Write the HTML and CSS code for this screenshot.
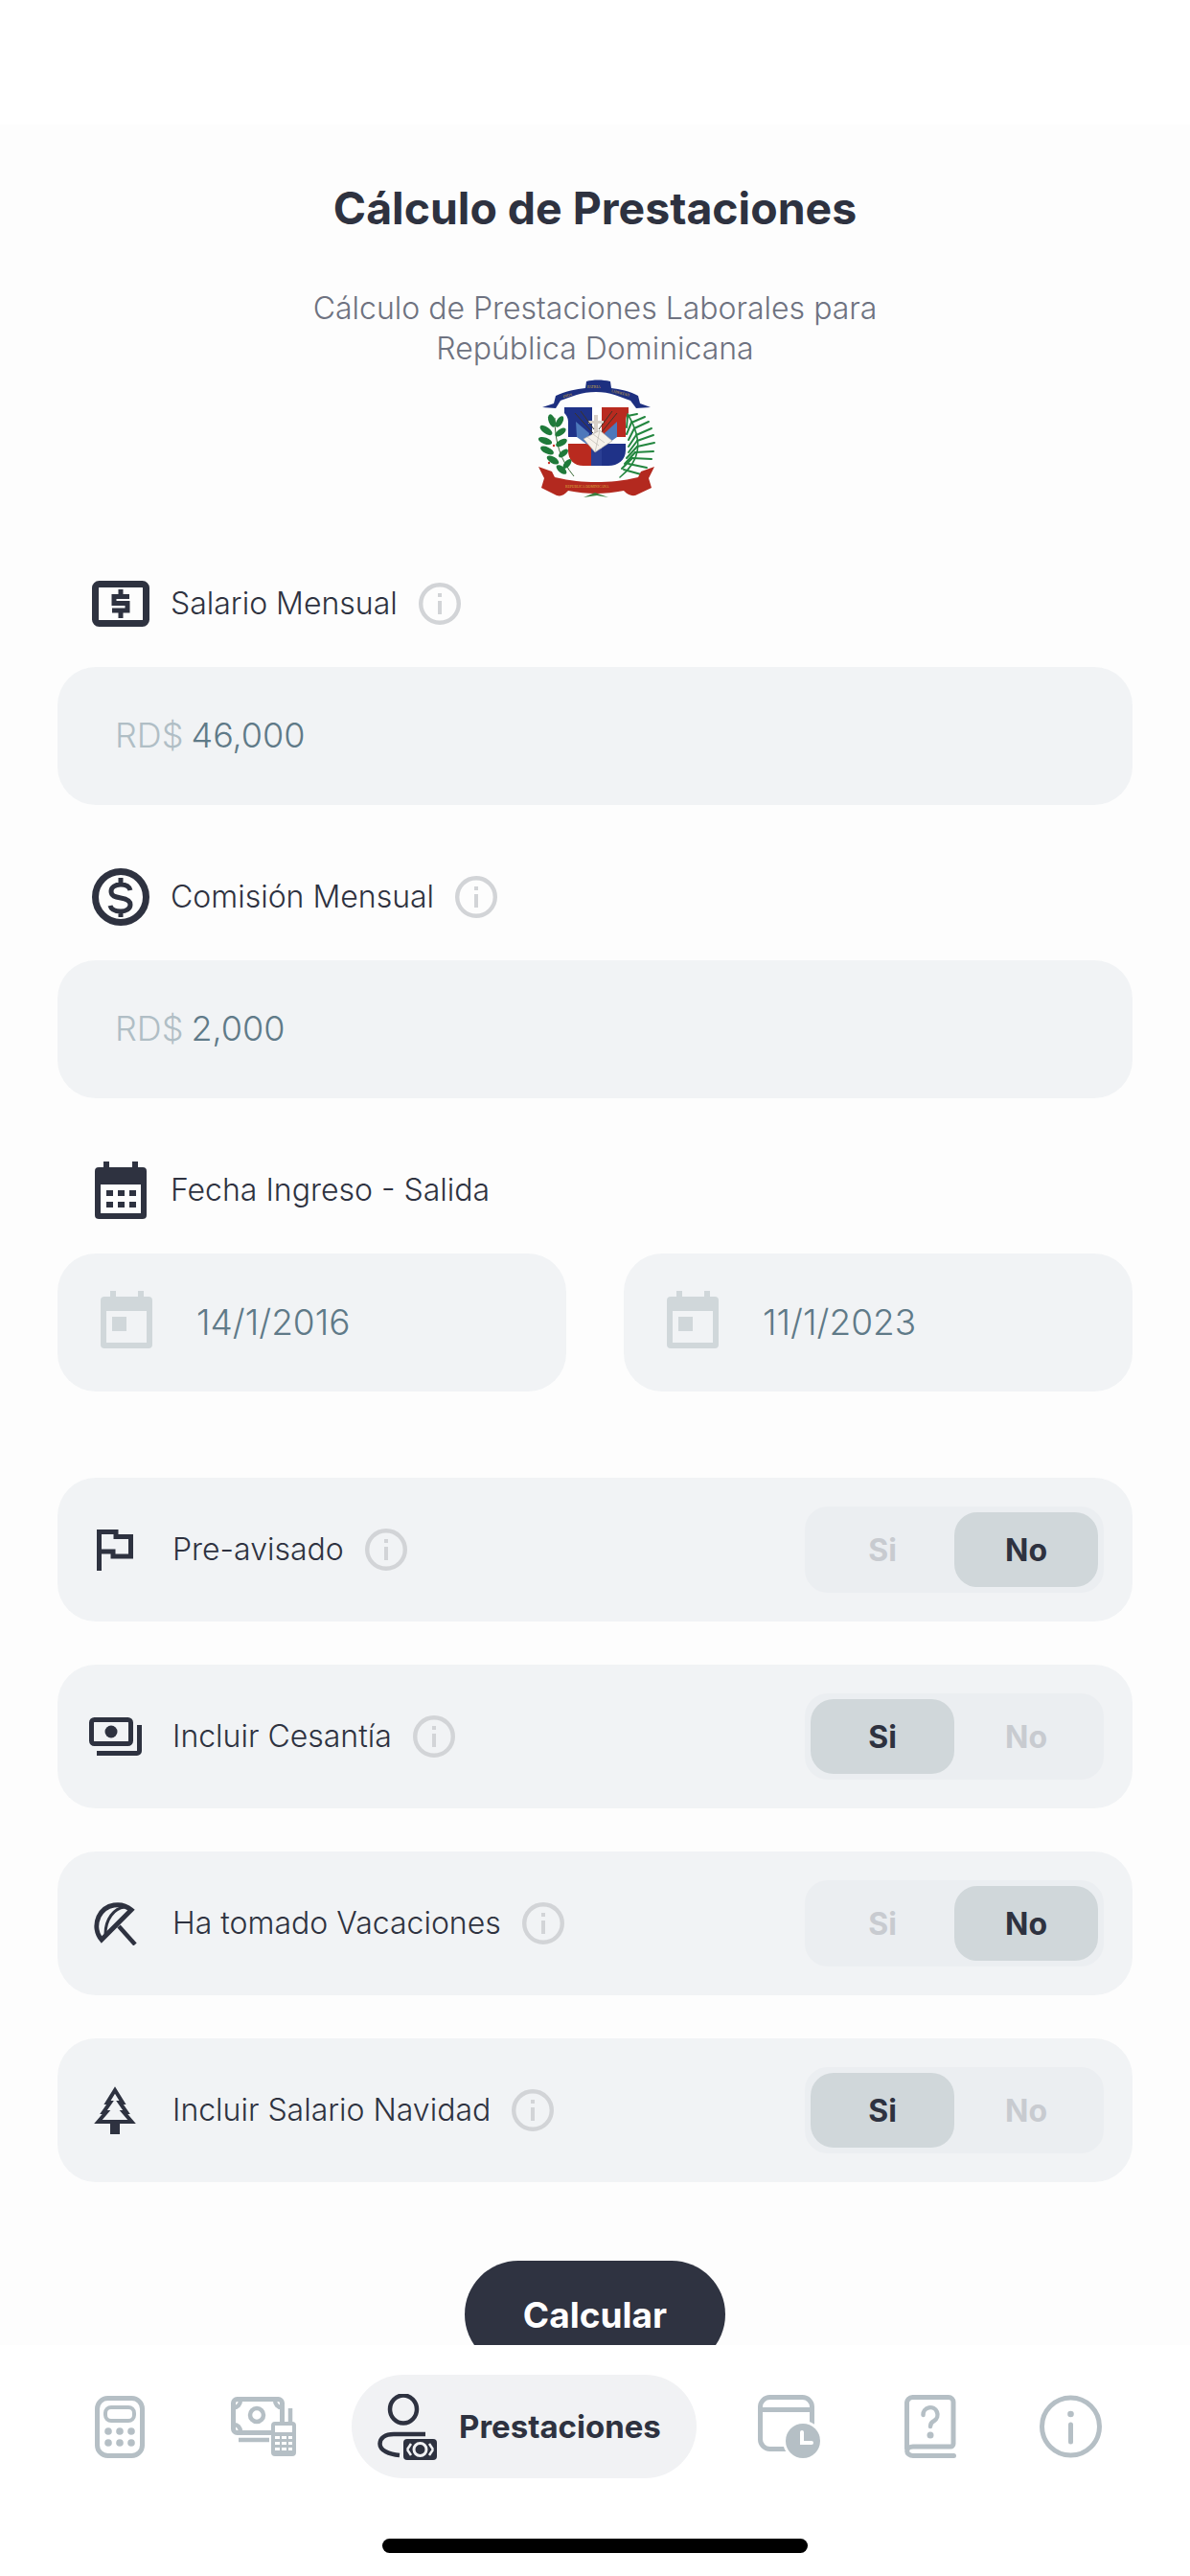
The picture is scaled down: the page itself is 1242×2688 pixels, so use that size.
FILE: index.html
```html
<!DOCTYPE html>
<html lang="es">
<head>
<meta charset="utf-8">
<title>Cálculo de Prestaciones</title>
<link rel="stylesheet" href="styles.css">
</head>
<body>
<svg class="defs" width="0" height="0">
  <defs>
    <symbol id="info" viewBox="0 0 44 44">
      <circle cx="22" cy="22" r="19.800" fill="none" stroke="currentColor" stroke-width="4.400"/>
      <rect x="20" y="11" width="4" height="4" fill="currentColor"/>
      <rect x="20" y="19" width="4" height="14" fill="currentColor"/>
    </symbol>
    <symbol id="cal-light" viewBox="0 0 54 60">
      <path fill-rule="evenodd" fill="#d0d7da" d="M10 0h6v6h23V0h6v6h5a4 4 0 0 1 4 4v46a4 4 0 0 1-4 4H4a4 4 0 0 1-4-4V10a4 4 0 0 1 4-4h6zM6 21v33h42V21z"/>
      <rect x="12" y="27" width="15" height="15" fill="#d0d7da"/>
    </symbol>
  </defs>
</svg>
<div class="screen">
  <div class="status"></div>
  <main class="content">
    <h1 class="title">Cálculo de Prestaciones</h1>
    <p class="subtitle">Cálculo de Prestaciones Laborales para<br>República Dominicana</p>
    <div class="emblem-wrap">
      <svg class="emblem" width="160" height="140" viewBox="0 0 160 140">
        <defs>
          <clipPath id="shield"><path d="M48 35H115V41C113 43 112 46 112 50V80C112 90 104 96 94 96H84L81 100L78 96H68C58 96 52 90 52 80V50C52 46 50 43 48 41Z"/></clipPath>
        </defs>
        <path fill="#1d2f80" d="M25 35L37 31L39 23C50 18 60 16 70 15L71 8C78 6 88 6 96 8L97 15C106 16 116 18 125 23L127 31L138 35L123 36L117 28C106 24 96 19 81 19C66 19 55 24 44 28L39 36Z"/>
        <text class="emblem-text" x="47" y="25" transform="rotate(-14 47 25)">DIOS</text>
        <text class="emblem-text" x="72" y="15">PATRIA</text>
        <text class="emblem-text" x="97" y="19" transform="rotate(14 97 19)">LIBERTAD</text>
        <g clip-path="url(#shield)">
          <rect x="46" y="33" width="72" height="68" fill="#fff"/>
          <rect x="46" y="33" width="31" height="33" fill="#1f3288"/>
          <rect x="87" y="33" width="30" height="33" fill="#b92a1f"/>
          <rect x="46" y="73" width="31" height="28" fill="#b92a1f"/>
          <rect x="87" y="73" width="30" height="28" fill="#1f3288"/>
          <path fill="#4d78bb" d="M60 50L74 62L72 74L61 66Z"/>
          <path fill="#4d78bb" d="M103 50L90 62L92 74L103 66Z"/>
          <rect x="76" y="78" width="11" height="18" fill="#2b3f94"/>
          <path fill="#d8d0c8" d="M79 43h4v6h6v3h-6v13h-4V52h-6v-3h6z"/>
        </g>
        <g stroke="#3d3428" stroke-width="1" fill="none">
          <path d="M59 41L78 62"/><path d="M65 39L79 58"/><path d="M103 41L86 62"/><path d="M98 39L84 58"/>
        </g>
        <path fill="#f6f2ea" stroke="#a9a59c" stroke-width=".6" d="M68 68L85 59L98 70L80 82Z"/>
        <path stroke="#a9a59c" stroke-width=".5" d="M85 59L80 82M72 66L84 75M78 63L90 72"/>
        <g fill="#1f7a3a">
          <path fill="none" stroke="#3a6b36" stroke-width="1" d="M58 107C44 90 38 72 38 46"/>
          <ellipse cx="35" cy="49" rx="3.400" ry="7" transform="rotate(-20 35 49)"/>
          <ellipse cx="43" cy="50" rx="3.200" ry="6.500" transform="rotate(30 43 50)"/>
          <ellipse cx="29" cy="59" rx="3.400" ry="7.500" transform="rotate(-55 29 59)"/>
          <ellipse cx="44" cy="61" rx="3.200" ry="6.500" transform="rotate(55 44 61)"/>
          <ellipse cx="28" cy="70" rx="3.400" ry="7.500" transform="rotate(-70 28 70)"/>
          <ellipse cx="45" cy="72" rx="3.200" ry="6.500" transform="rotate(60 45 72)"/>
          <ellipse cx="30" cy="80" rx="3.400" ry="7.500" transform="rotate(-65 30 80)"/>
          <ellipse cx="47" cy="83" rx="3" ry="6" transform="rotate(50 47 83)"/>
          <ellipse cx="36" cy="90" rx="3.400" ry="7" transform="rotate(-60 36 90)"/>
          <ellipse cx="51" cy="94" rx="3" ry="6" transform="rotate(40 51 94)"/>
          <ellipse cx="45" cy="100" rx="3.200" ry="6.500" transform="rotate(-50 45 100)"/>
        </g>
        <circle cx="37" cy="75" r="1.200" fill="#c8322a"/>
        <circle cx="32" cy="93" r="1.200" fill="#c8322a"/>
        <g fill="none" stroke="#23863f" stroke-width="2" stroke-linecap="round">
          <path d="M106 108C126 92 132 72 114 42" stroke-width="1.600"/>
          <path d="M114 44L124 42M118 51L132 45M121 57L136 50M123 64L139 57M124 70L141 64M124 76L142 72M122 82L141 81M119 88L139 89M115 94L134 98M110 100L128 105"/>
          <path d="M114 44L113 56M118 51L113 63M121 57L115 69M123 64L115 76M124 70L115 82M124 76L113 88M122 82L111 94M119 88L108 99"/>
        </g>
        <path fill="#b3291f" d="M21 97L35 102L38 108C55 112 67 113 81 113C96 113 109 112 125 108L128 102L142 97L136 109L139 119L122 127C116 128 112 124 110 122C100 124 90 125 81 125C71 125 62 124 52 122C50 124 46 129 40 127L24 119L27 109Z"/>
        <text class="emblem-text emblem-text-low" x="49" y="119">REPUBLICA DOMINICANA</text>
        <path fill="#3a7d3f" d="M68 129L80 124L94 129L82 127Z"/>
      </svg>
    </div>

    <div class="field-label">
      <span class="label-icon">
        <svg width="60" height="48" viewBox="0 0 60 48" fill="none" stroke="#2e3240">
          <rect x="3.500" y="3.500" width="53" height="41" rx="4" stroke-width="7"/>
          <path stroke-width="5" d="M39 16.500H23v7h14v7.500H21M30 9v7M30 32v7"/>
        </svg>
      </span>
      <span class="label-text">Salario Mensual</span>
      <svg class="info" width="44" height="44"><use href="#info"/></svg>
    </div>
    <div class="input"><span class="prefix">RD$</span><span class="value">46,000</span></div>

    <div class="field-label">
      <span class="label-icon">
        <svg width="60" height="60" viewBox="0 0 60 60" fill="none" stroke="#2e3240">
          <circle cx="30" cy="30" r="26.500" stroke-width="7"/>
          <path stroke-width="5" d="M40 23c-1-4-5-6-10-6-6 0-10 3-10 7 0 5 4 6 10 7 6 1 10 3 10 7s-4 7-10 7c-6 0-10-2-11-6M30 10v7M30 45v6"/>
        </svg>
      </span>
      <span class="label-text">Comisión Mensual</span>
      <svg class="info" width="44" height="44"><use href="#info"/></svg>
    </div>
    <div class="input"><span class="prefix">RD$</span><span class="value">2,000</span></div>

    <div class="field-label">
      <span class="label-icon">
        <svg width="54" height="60" viewBox="0 0 54 60">
          <path fill-rule="evenodd" fill="#2e3240" d="M9 0h6v6h24V0h6v6h5a4 4 0 0 1 4 4v46a4 4 0 0 1-4 4H4a4 4 0 0 1-4-4V10a4 4 0 0 1 4-4h5zM6 24v30h42V24z"/>
          <path fill="#2e3240" d="M12 30h7v6h-7zM24 30h7v6h-7zM36 30h7v6h-7zM12 42h7v6h-7zM24 42h7v6h-7zM36 42h7v6h-7z"/>
        </svg>
      </span>
      <span class="label-text">Fecha Ingreso - Salida</span>
    </div>
    <div class="dates">
      <div class="date"><svg class="date-icon" width="54" height="60"><use href="#cal-light"/></svg><span class="value">14/1/2016</span></div>
      <div class="date"><svg class="date-icon" width="54" height="60"><use href="#cal-light"/></svg><span class="value">11/1/2023</span></div>
    </div>

    <div class="options">
      <div class="option">
        <span class="option-icon">
          <svg width="38" height="43" viewBox="0 0 38 43" fill="none" stroke="#2e3240" stroke-width="5">
            <path d="M2.500 43V2.500H20V7.500H35.500V28H17V23H2.500"/>
          </svg>
        </span>
        <span class="label-text">Pre-avisado</span>
        <svg class="info" width="44" height="44"><use href="#info"/></svg>
        <div class="toggle"><span class="seg">Si</span><span class="seg seg-on">No</span></div>
      </div>
      <div class="option">
        <span class="option-icon">
          <svg width="55" height="40" viewBox="0 0 55 40" fill="none" stroke="#2e3240" stroke-width="5">
            <rect x="2.500" y="2.500" width="41" height="25" rx="3"/>
            <circle cx="23" cy="15" r="6.500" fill="#2e3240" stroke="none"/>
            <path d="M52.500 8V35a2.500 2.500 0 0 1-2.500 2.500H8"/>
          </svg>
        </span>
        <span class="label-text">Incluir Cesantía</span>
        <svg class="info" width="44" height="44"><use href="#info"/></svg>
        <div class="toggle"><span class="seg seg-on">Si</span><span class="seg">No</span></div>
      </div>
      <div class="option">
        <span class="option-icon">
          <svg width="45" height="45" viewBox="0 0 45 45" fill="none" stroke="#2e3240">
            <path stroke-width="5" d="M39 8C29-.5 12 1 5 15 1 24 3 33 8 39Z"/>
            <path stroke-width="3" d="M32 5C21 6 12 18 12 33"/>
            <path stroke-width="4.500" d="M26 25L43 44"/>
          </svg>
        </span>
        <span class="label-text">Ha tomado Vacaciones</span>
        <svg class="info" width="44" height="44"><use href="#info"/></svg>
        <div class="toggle"><span class="seg">Si</span><span class="seg seg-on">No</span></div>
      </div>
      <div class="option">
        <span class="option-icon">
          <svg width="44" height="50" viewBox="0 0 44 50">
            <path fill="none" stroke="#2e3240" stroke-width="4" d="M22 4L30 17H27L34 27H31L39.500 37H4.500L13 27H10L17 17H14Z"/>
            <rect x="17" y="38" width="10" height="12" fill="#2e3240"/>
          </svg>
        </span>
        <span class="label-text">Incluir Salario Navidad</span>
        <svg class="info" width="44" height="44"><use href="#info"/></svg>
        <div class="toggle"><span class="seg seg-on">Si</span><span class="seg">No</span></div>
      </div>
    </div>
    <button class="submit" type="button">Calcular</button>
  </main>

  <footer class="nav">
    <div class="tabs">
      <span class="tab tab-left">
        <svg width="52" height="65" viewBox="0 0 52 65" fill="none" stroke="#b5bfc5">
          <rect x="2.500" y="2.500" width="47" height="60" rx="11" stroke-width="5"/>
          <rect x="11" y="12" width="30" height="14" rx="6" stroke-width="4"/>
          <g fill="#b5bfc5" stroke="none">
            <circle cx="14" cy="37" r="3.800"/><circle cx="26" cy="37" r="3.800"/><circle cx="38" cy="37" r="3.800"/>
            <circle cx="14" cy="49" r="3.800"/><circle cx="26" cy="49" r="3.800"/><circle cx="38" cy="49" r="3.800"/>
          </g>
        </svg>
      </span>
      <span class="tab tab-left">
        <svg width="68" height="62" viewBox="0 0 68 62" fill="none" stroke="#b5bfc5">
          <rect x="2.500" y="2.500" width="51" height="35" rx="4" stroke-width="5"/>
          <circle cx="27" cy="19" r="7" stroke-width="4.500"/>
          <path stroke-width="4.500" d="M3 11c4 0 7-3 7-8M53 11c-4 0-7-3-7-8M3 29c4 0 7 3 7 8"/>
          <path stroke-width="4.500" d="M62 12V28M8 45H40"/>
          <rect x="42" y="26" width="26" height="36" rx="4" fill="#b5bfc5" stroke="none"/>
          <rect x="46" y="30" width="18" height="7" fill="#fff" stroke="none"/>
          <g fill="#fff" stroke="none">
            <rect x="46" y="41" width="5" height="3"/><rect x="53" y="41" width="5" height="3"/><rect x="60" y="41" width="4" height="3"/>
            <rect x="46" y="47" width="5" height="3"/><rect x="53" y="47" width="5" height="3"/><rect x="60" y="47" width="4" height="3"/>
            <rect x="46" y="53" width="5" height="3"/><rect x="53" y="53" width="5" height="3"/><rect x="60" y="53" width="4" height="3"/>
          </g>
        </svg>
      </span>
      <span class="tab-active">
        <svg width="62" height="69" viewBox="0 0 62 69" fill="none" stroke="#2e3240">
          <ellipse cx="27" cy="16" rx="14" ry="14.500" stroke-width="4.500"/>
          <path stroke-width="4.500" d="M50 42H17C8 42 2.500 46 2.500 52 2.500 59 12 63 23 64"/>
          <rect x="27" y="47" width="35" height="22" rx="4" fill="#2e3240" stroke="none"/>
          <ellipse cx="44.500" cy="58" rx="6.500" ry="6.500" stroke="#f1f2f4" stroke-width="3"/>
          <path stroke="#f1f2f4" stroke-width="2.500" d="M31 58l4-6M31 58l4 6M58 58l-4-6M58 58l-4 6"/>
        </svg>
        <span class="tab-text">Prestaciones</span>
      </span>
      <span class="tab tab-right">
        <svg width="65" height="66" viewBox="0 0 65 66" fill="none" stroke="#b5bfc5" stroke-width="5">
          <rect x="2.500" y="2.500" width="54" height="54" rx="10"/>
          <path d="M3 15.500H56"/>
          <circle cx="47" cy="48" r="21" fill="#fff" stroke="none"/>
          <circle cx="47" cy="48" r="18" fill="#b5bfc5" stroke="none"/>
          <path stroke="#fff" stroke-width="4" stroke-linecap="round" d="M46 39V50H56"/>
        </svg>
      </span>
      <span class="tab tab-right">
        <svg width="54" height="66" viewBox="0 0 54 66" fill="none" stroke="#b5bfc5" stroke-width="5" stroke-linecap="round">
          <path d="M2.500 56V9a6 6 0 0 1 6-6.500H46a5 5 0 0 1 5 5V51a3 3 0 0 1-3 3H9a6 4.500 0 0 0 0 9.500H51.500"/>
          <path stroke-width="4.500" d="M19.500 21a7.500 7.500 0 1 1 11.500 6c-3 1.500-4 3-4 6"/>
          <circle cx="27" cy="42" r="3.500" fill="#b5bfc5" stroke="none"/>
        </svg>
      </span>
      <span class="tab tab-right">
        <svg width="65" height="66" viewBox="0 0 65 66" fill="none" stroke="#b5bfc5" stroke-width="5" stroke-linecap="round">
          <circle cx="32.500" cy="33" r="30"/>
          <circle cx="32.500" cy="20" r="3.300" fill="#b5bfc5" stroke="none"/>
          <path d="M32.500 31V49"/>
        </svg>
      </span>
    </div>
    <div class="home-indicator"></div>
  </footer>
</div>
</body>
</html>
```

FILE: styles.css
```css
* { box-sizing: border-box; }
html, body { margin: 0; padding: 0; background: #fff; }
body { font-family: Inter, "Noto Sans", sans-serif; color: #2e3240; }
.defs { position: absolute; }
.screen { width: 1242px; height: 2688px; display: flex; flex-direction: column; overflow: hidden; background: #fff; }
.status { height: 130px; flex: none; background: #fff; }
.content { height: 2317px; flex: none; overflow: hidden; background: #fdfdfd; padding: 57px 60px 0; display: flex; flex-direction: column; }
.content > * { flex: none; }

.title { margin: 0; font-size: 46.400px; line-height: 60px; font-weight: 700; text-align: center; color: #2e3240; }
.subtitle { margin: 54px 0 0; font-size: 32px; line-height: 42px; font-weight: 300; text-align: center; color: #6e7280; }
.emblem-wrap { margin-top: 5px; height: 140px; display: flex; justify-content: center; }
.emblem { display: block; }
.emblem-text { font-family: "Liberation Serif", serif; font-size: 4px; fill: #d9b13b; }
.emblem-text-low { font-size: 3.700px; }

.field-label { display: flex; align-items: center; gap: 22px; height: 60px; margin-top: 66px; padding-left: 36px; }
.emblem-wrap + .field-label { margin-top: 70px; }
.label-icon { width: 60px; height: 60px; display: flex; align-items: center; justify-content: center; flex: none; }
.label-text { font-size: 32px; font-weight: 350; color: #2e3240; line-height: 44px; }
.info { color: #d2d4d7; flex: none; display: block; }

.input { height: 144px; margin-top: 36px; border-radius: 40px; background: #f1f3f5; padding: 0 0 3px 60px; display: flex; align-items: center; gap: 8px; font-size: 36px; font-weight: 300; }
.prefix { color: #b0bec5; }
.value { color: #5f7a88; }

.dates { display: flex; gap: 60px; margin-top: 36px; }
.date { flex: 1; height: 144px; border-radius: 40px; background: #f1f3f5; padding: 0 0 2px 45px; display: flex; align-items: center; gap: 46px; font-size: 37px; font-weight: 300; }
.date-icon { margin-bottom: 4px; }

.options { display: flex; flex-direction: column; gap: 45px; margin-top: 90px; }
.option { height: 150px; border-radius: 40px; background: #f1f3f5; padding: 0 30px; display: flex; align-items: center; gap: 22px; }
.option-icon { width: 60px; height: 60px; margin-right: 8px; display: flex; align-items: center; justify-content: center; flex: none; }
.toggle { margin-left: auto; height: 90px; padding: 6px; border-radius: 24px; background: #ebeef1; display: flex; }
.seg { width: 150px; height: 78px; border-radius: 24px; display: flex; align-items: center; justify-content: center; font-size: 32px; font-weight: 700; color: #c8cbd0; }
.seg-on { background: #d0d7da; color: #2e3240; }

.submit { align-self: center; width: 272px; height: 112px; margin-top: 82px; border: 0; border-radius: 56px; background: #2f3341; color: #fff; font-family: inherit; font-size: 37px; font-weight: 700; padding: 0; }

.nav { height: 241px; flex: none; background: #fff; padding-top: 31px; display: flex; flex-direction: column; }
.tabs { display: flex; align-items: center; height: 108px; padding-left: 50px; }
.tab { display: flex; align-items: center; justify-content: center; flex: none; }
.tab-left { width: 150px; }
.tab-right { width: 147px; }
.tab-active { width: 360px; height: 108px; margin: 0 23px 0 17px; border-radius: 54px; background: #f1f2f4; padding-left: 27px; display: flex; align-items: center; gap: 23px; flex: none; }
.tab-text { font-size: 33px; font-weight: 700; color: #2e3240; }
.home-indicator { width: 444px; height: 15px; margin: 63px auto 0; border-radius: 8px; background: #000; }
```
